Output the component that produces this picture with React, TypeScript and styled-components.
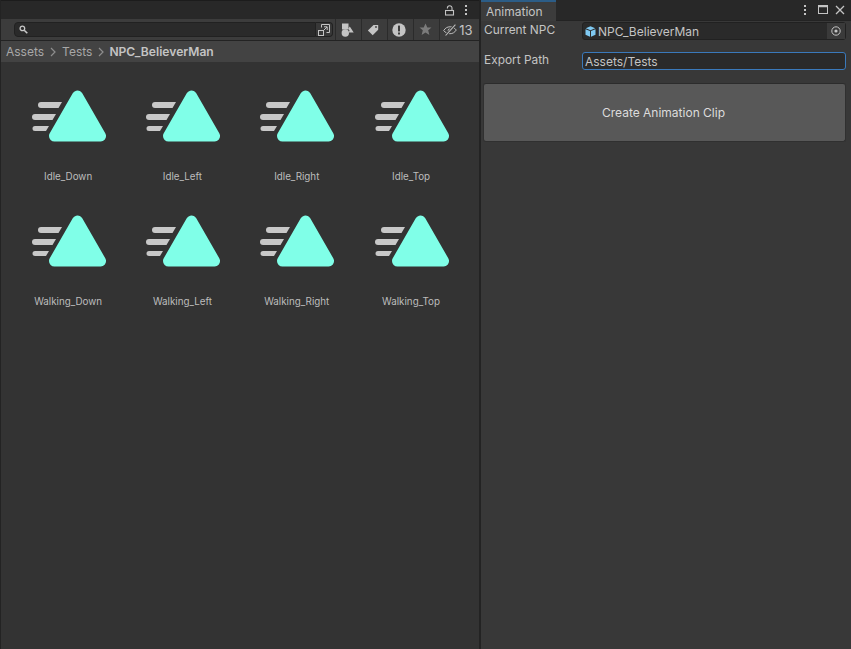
import styled, { createGlobalStyle } from 'styled-components';

const GlobalStyle = createGlobalStyle`
  html, body {
    margin: 0;
    height: 100%;
    background: #232323;
    overflow: hidden;
  }
  #root {
    height: 100%;
  }
`;

const Editor = styled.div`
  display: flex;
  width: 851px;
  height: 649px;
  font-family: Inter, "Liberation Sans", sans-serif;
  color: #c4c4c4;
  background: #232323;
`;

const ProjectPanel = styled.section`
  width: 478px;
  margin-left: 1px;
  display: flex;
  flex-direction: column;
`;

const InspectorPanel = styled.section`
  width: 370px;
  margin-left: 2px;
  display: flex;
  flex-direction: column;
`;

const TabBar = styled.div`
  height: 19px;
  flex: none;
  display: flex;
  align-items: center;
  justify-content: flex-end;
  gap: 9px;
  background: #282828;
  border-top: 1px solid #1c1c1c;
  box-sizing: border-box;
  padding-right: 11px;
`;

const WindowTabBar = styled(TabBar)`
  height: 21px;
  justify-content: space-between;
  border-top: none;
  padding-right: 6px;
  border-bottom: 1px solid #232323;
`;

const Tab = styled.div`
  width: 75px;
  height: 21px;
  box-sizing: border-box;
  background: #3c3c3c;
  border-top: 2px solid #2c5d87;
  color: #c4c4c4;
  font-size: 12px;
  line-height: 16px;
  padding: 2px 0 0 5px;
`;

const WindowIcons = styled.div`
  display: flex;
  align-items: center;
  gap: 6px;
`;

const MenuDots = styled.div`
  display: flex;
  margin-right: 5px;
`;

const Toolbar = styled.div`
  height: 22px;
  flex: none;
  display: flex;
  align-items: center;
  box-sizing: border-box;
  background: #3c3c3c;
  border-bottom: 1px solid #232323;
  padding-left: 13px;
`;

const SearchField = styled.div`
  width: 302px;
  height: 15px;
  flex: none;
  display: flex;
  align-items: center;
  box-sizing: border-box;
  background: #2a2a2a;
  border: 1px solid #212121;
  border-radius: 4px 0 0 4px;
  padding-left: 4px;
`;

const SearchToggle = styled.div`
  width: 17px;
  height: 15px;
  flex: none;
  display: flex;
  align-items: center;
  justify-content: center;
  box-sizing: border-box;
  background: #383838;
  border: 1px solid #212121;
  border-left: none;
  border-radius: 0 4px 4px 0;
  margin-right: 2px;
`;

const FilterButton = styled.div<{ $width: number }>`
  width: ${(p) => p.$width}px;
  height: 21px;
  flex: none;
  display: flex;
  align-items: center;
  justify-content: center;
  gap: 2px;
  box-sizing: border-box;
  border-left: 1px solid #2b2b2b;
  padding-right: 3px;
  font-size: 13px;
  color: #c4c4c4;
`;

const Breadcrumb = styled.div`
  height: 21px;
  flex: none;
  display: flex;
  align-items: center;
  gap: 5px;
  background: #434343;
  padding-left: 5px;
  font-size: 12px;
  color: #a8a8a8;
`;

const CurrentCrumb = styled.span`
  margin-left: -1px;
  font-size: 12.1px;
  font-weight: 600;
  color: #c4c4c4;
`;

const AssetArea = styled.div`
  flex: 1;
  background: #333333;
  padding-top: 27px;
`;

const AssetGrid = styled.div`
  display: grid;
  grid-template-columns: repeat(4, 114.3px);
  grid-auto-rows: 125px;
  padding-left: 10px;
`;

const AssetCell = styled.div`
  display: flex;
  flex-direction: column;
  align-items: center;
`;

const AssetLabel = styled.div`
  margin-top: 27px;
  font-size: 9.8px;
  line-height: 14px;
  color: #bdbdbd;
`;

const InspectorBody = styled.div`
  flex: 1;
  display: flex;
  flex-direction: column;
  background: #383838;
  padding: 1px 5px 0 3px;
`;

const FieldRow = styled.div`
  display: flex;
  align-items: center;
  height: 18px;
  margin-bottom: 12px;
`;

const FieldLabel = styled.div`
  width: 98px;
  flex: none;
  font-size: 11.9px;
  line-height: 14px;
  margin-bottom: 2px;
  color: #c4c4c4;
`;

const ObjectField = styled.div`
  flex: 1;
  height: 18px;
  display: flex;
  align-items: center;
  box-sizing: border-box;
  background: #2a2a2a;
  border: 1px solid #212121;
  border-radius: 3px;
  padding-left: 2px;
  font-size: 12px;
  color: #c4c4c4;
  gap: 2px;
`;

const ObjectPicker = styled.div`
  width: 18px;
  height: 16px;
  margin-left: auto;
  display: flex;
  align-items: center;
  justify-content: center;
  background: #3a3a3a;
`;

const PathField = styled.div`
  flex: 1;
  height: 18px;
  box-sizing: border-box;
  background: #2a2a2a;
  border: 1px solid #3a79bb;
  border-radius: 3px;
  padding-left: 2px;
  font-size: 12px;
  line-height: 17px;
  color: #c4c4c4;
`;

const CreateButton = styled.button`
  display: block;
  width: 363px;
  height: 59px;
  margin: 1px 0 0 -1px;
  padding: 0 2px 0 0;
  box-sizing: border-box;
  background: #585858;
  border: 1px solid #303030;
  border-top-color: #2c2c2c;
  border-radius: 3px;
  font-family: inherit;
  font-size: 12px;
  color: #dcdcdc;
`;

const Lock = () => (
  <svg width="10" height="11" viewBox="0 0 10 11" fill="none" stroke="#c4c4c4" strokeWidth="1.1">
    <rect x="0.5" y="5.5" width="8" height="4.500" />
    <path d="M7 5.500V3a2.300 2.300 0 0 0-4.600 0v.5" />
  </svg>
);

const Dots = () => (
  <svg width="4" height="10" viewBox="0 0 4 10" fill="#c4c4c4">
    <rect x="1" y="0" width="2" height="2" />
    <rect x="1" y="4" width="2" height="2" />
    <rect x="1" y="8" width="2" height="2" />
  </svg>
);

const Maximize = () => (
  <svg width="11" height="10" viewBox="0 0 11 10" fill="none" stroke="#c4c4c4">
    <rect x="0.5" y="0.5" width="9" height="8" />
    <path d="M0.5 1.5h9" strokeWidth="1.5" />
  </svg>
);

const Close = () => (
  <svg width="10" height="10" viewBox="0 0 10 10" stroke="#c4c4c4" strokeWidth="1.3">
    <path d="M1 1l8 8M9 1l-8 8" />
  </svg>
);

const SearchIcon = () => (
  <svg width="9" height="9" viewBox="0 0 9 9" fill="none" stroke="#c8c8c8" strokeWidth="1.3">
    <circle cx="3.4" cy="3.4" r="2.3" />
    <path d="M5.2 5.2L8.3 8.3" strokeWidth="1.6" />
  </svg>
);

const PopOutIcon = () => (
  <svg width="12" height="12" viewBox="0 0 12 12" fill="none" stroke="#c4c4c4">
    <path d="M3.5 3.5V.5h8v8h-3" />
    <rect x="0.5" y="6.5" width="5" height="5" />
    <path d="M5 7l4-4M6 2.8h3.2V6" />
  </svg>
);

const TypeFilterIcon = () => (
  <svg width="13" height="14" viewBox="0 0 13 14" fill="#c4c4c4">
    <rect x="1" y="0.5" width="6.5" height="6" />
    <circle cx="4.3" cy="10" r="3.7" />
    <path d="M8.8 3.5l3.9 6H7.6l.9-1.8-1-1.6h-.4z" />
  </svg>
);

const TagIcon = () => (
  <svg width="12" height="12" viewBox="0 0 12 12" fill="#c4c4c4">
    <path d="M6.5 1h4.7v4.7L5.7 11.3 0.9 6.5z" />
    <circle cx="9" cy="3" r="0.9" fill="#3c3c3c" />
  </svg>
);

const WarningIcon = () => (
  <svg width="14" height="14" viewBox="0 0 14 14">
    <circle cx="7" cy="7" r="6.7" fill="#c4c4c4" />
    <rect x="6" y="2.6" width="2" height="5.8" fill="#3c3c3c" />
    <rect x="6" y="9.5" width="2" height="2" fill="#3c3c3c" />
  </svg>
);

const StarIcon = () => (
  <svg width="13" height="13" viewBox="0 0 13 13" fill="#7b7b7b">
    <path d="M6.5 0.5l1.8 4h4.2l-3.3 2.8 1.2 4.6-3.9-2.5-3.9 2.5 1.2-4.6L.5 4.5h4.2z" />
  </svg>
);

const HiddenIcon = () => (
  <svg width="14" height="12" viewBox="0 0 14 12" fill="none" stroke="#bdbdbd" strokeWidth="1">
    <path d="M.7 6.500C2.500 3.800 4.500 2.800 7 2.800s4.500 1 6.300 3.200c-1.800 2.700-3.800 3.700-6.300 3.700S2.500 8.900.7 6.500z" />
    <circle cx="6.500" cy="6.300" r="1.700" fill="#bdbdbd" stroke="none" />
    <path d="M2.600 11.500L12.400.6" stroke="#3c3c3c" strokeWidth="2.600" />
    <path d="M2.600 11.500L12.400.6" strokeWidth="1.100" />
  </svg>
);

const CubeIcon = () => (
  <svg width="11" height="11" viewBox="0 0 11 11" fill="#7fc9f2">
    <path d="M5.500 0.300l4.700 2-4.700 2-4.700-2z" />
    <path d="M0.500 3.200l4.500 1.900v5.600l-4.500-2z" />
    <path d="M10.500 3.200L6 5.100v5.600l4.500-2z" />
  </svg>
);

const PickerIcon = () => (
  <svg width="10" height="10" viewBox="0 0 10 10" fill="none" stroke="#c4c4c4">
    <circle cx="5" cy="5" r="4.200" />
    <circle cx="5" cy="5" r="1.600" fill="#c4c4c4" stroke="none" />
  </svg>
);

const Chevron = () => (
  <svg width="8" height="10" viewBox="0 0 8 10" fill="none" stroke="#8e8e8e" strokeWidth="1.200">
    <path d="M2 1l4 4-4 4" />
  </svg>
);

const ClipIcon = () => (
  <svg width="75" height="54" viewBox="0 0 75 54">
    <path d="M10 13h21l-3.500 6H10a3 3 0 0 1 0-6z" fill="#c8c8c8" />
    <path d="M4 25h21l-3.500 6H4a3 3 0 0 1 0-6z" fill="#c8c8c8" />
    <path d="M4 37h14l-3 5H4a2.500 2.500 0 0 1 0-5z" fill="#c8c8c8" />
    <path
      d="M46.500 7L69.500 47H23.500z"
      fill="#80ffe8"
      stroke="#80ffe8"
      strokeWidth="11"
      strokeLinejoin="round"
    />
  </svg>
);

const assets = [
  'Idle_Down',
  'Idle_Left',
  'Idle_Right',
  'Idle_Top',
  'Walking_Down',
  'Walking_Left',
  'Walking_Right',
  'Walking_Top',
];

export default function App() {
  return (
    <Editor>
      <GlobalStyle />
      <ProjectPanel>
        <TabBar>
          <Lock />
          <Dots />
        </TabBar>
        <Toolbar>
          <SearchField>
            <SearchIcon />
          </SearchField>
          <SearchToggle>
            <PopOutIcon />
          </SearchToggle>
          <FilterButton $width={26}><TypeFilterIcon /></FilterButton>
          <FilterButton $width={26}><TagIcon /></FilterButton>
          <FilterButton $width={26}><WarningIcon /></FilterButton>
          <FilterButton $width={26}><StarIcon /></FilterButton>
          <FilterButton $width={40}><HiddenIcon />13</FilterButton>
        </Toolbar>
        <Breadcrumb>
          Assets <Chevron /> Tests <Chevron /> <CurrentCrumb>NPC_BelieverMan</CurrentCrumb>
        </Breadcrumb>
        <AssetArea>
          <AssetGrid>
            {assets.map((name) => (
              <AssetCell key={name}>
                <ClipIcon />
                <AssetLabel>{name}</AssetLabel>
              </AssetCell>
            ))}
          </AssetGrid>
        </AssetArea>
      </ProjectPanel>
      <InspectorPanel>
        <WindowTabBar>
          <Tab>Animation</Tab>
          <WindowIcons>
            <MenuDots><Dots /></MenuDots>
            <Maximize />
            <Close />
          </WindowIcons>
        </WindowTabBar>
        <InspectorBody>
          <FieldRow>
            <FieldLabel>Current NPC</FieldLabel>
            <ObjectField>
              <CubeIcon />
              NPC_BelieverMan
              <ObjectPicker><PickerIcon /></ObjectPicker>
            </ObjectField>
          </FieldRow>
          <FieldRow>
            <FieldLabel>Export Path</FieldLabel>
            <PathField>Assets/Tests</PathField>
          </FieldRow>
          <CreateButton>Create Animation Clip</CreateButton>
        </InspectorBody>
      </InspectorPanel>
    </Editor>
  );
}
